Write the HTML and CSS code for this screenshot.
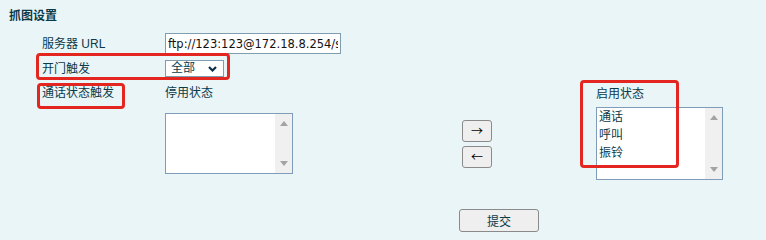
FILE: index.html
```html
<!DOCTYPE html>
<html lang="zh-CN">
<head>
<meta charset="utf-8">
<title>抓图设置</title>
<link rel="stylesheet" href="styles.css">
</head>
<body>
<div class="sheet">
  <div class="title">抓图设置</div>

  <div class="row row-url">
    <div class="label">服务器 URL</div>
    <input class="url-input" type="text" value="ftp://123:123@172.18.8.254/snapshot">
  </div>

  <div class="row row-door">
    <div class="label">开门触发</div>
    <div class="select">
      <span class="select-text">全部</span>
      <svg class="chevron" width="9" height="6" viewBox="0 0 9 6"><path d="M1 1 L4.5 4.5 L8 1" fill="none" stroke="#0b2f4a" stroke-width="2.2"/></svg>
    </div>
  </div>

  <div class="row row-call">
    <div class="label">通话状态触发</div>
    <div class="transfer">
      <div class="col col-off">
        <div class="col-label">停用状态</div>
        <div class="listbox list-off">
          <div class="items"></div>
          <div class="scroll"><span class="tri up"></span><span class="tri down"></span></div>
        </div>
      </div>
      <div class="arrows">
        <button class="arrow-btn" type="button">→</button>
        <button class="arrow-btn" type="button">←</button>
      </div>
      <div class="col col-on">
        <div class="col-label">启用状态</div>
        <div class="listbox list-on">
          <div class="items">
            <div class="item">通话</div>
            <div class="item">呼叫</div>
            <div class="item">振铃</div>
          </div>
          <div class="scroll"><span class="tri up"></span><span class="tri down"></span></div>
        </div>
      </div>
    </div>
  </div>

  <div class="submit-row">
    <button class="submit" type="button">提交</button>
  </div>

  <div class="mark mark-door"></div>
  <div class="mark mark-call"></div>
  <div class="mark mark-on"></div>
</div>
</body>
</html>
```

FILE: styles.css
```css
html, body {
  margin: 0;
  padding: 0;
}
body {
  background: #eaf5f8;
  color: #0a3a4a;
  font-family: "Liberation Sans", "Noto Sans CJK SC", sans-serif;
  font-size: 12px;
  width: 766px;
  height: 240px;
  overflow: hidden;
}
.sheet {
  position: relative;
  width: 766px;
  height: 240px;
}
.title {
  padding: 9px 0 0 9px;
  font-weight: bold;
  line-height: 14px;
  height: 14px;
}
.row {
  display: flex;
  align-items: center;
  padding-left: 42px;
}
.label {
  width: 123px;
  flex: none;
  line-height: 20px;
}
.row-url {
  margin-top: 10px;
  height: 21px;
}
.url-input {
  box-sizing: border-box;
  width: 176px;
  height: 21px;
  margin: 0;
  padding: 0 2px;
  border: 1px solid #7f9db0;
  background: #fff;
  color: #111;
  font-family: "DejaVu Sans", sans-serif;
  font-size: 11.5px;
  outline: none;
}
.row-door {
  margin-top: 6px;
  height: 17px;
}
.select {
  box-sizing: border-box;
  width: 59px;
  height: 17px;
  border: 1px solid #7f9db0;
  background: #fff;
  display: flex;
  align-items: center;
  justify-content: space-between;
  padding: 0 6px 0 5px;
}
.select-text {
  line-height: 15px;
  color: #0a3a4a;
}
.chevron {
  display: block;
}
.row-call {
  margin-top: 6px;
  align-items: flex-start;
}
.transfer {
  display: flex;
  align-items: flex-start;
}
.col-label {
  line-height: 20px;
}
.col-off .listbox {
  margin-top: 10px;
  width: 128px;
  height: 61px;
}
.col-on {
  margin-left: 104px;
  margin-top: 1px;
}
.col-on .listbox {
  margin-top: 3px;
  width: 127px;
  height: 73px;
}
.listbox {
  box-sizing: border-box;
  border: 1px solid #7f9db9;
  background: #fff;
  display: flex;
}
.items {
  flex: 1;
  padding-left: 2px;
}
.item {
  line-height: 18px;
  color: #0a3a4a;
}
.scroll {
  width: 17px;
  flex: none;
  background: #f0f0f0;
  display: flex;
  flex-direction: column;
  justify-content: space-between;
  align-items: center;
  padding: 7px 0 7px;
}
.tri {
  width: 0;
  height: 0;
  border-left: 4px solid transparent;
  border-right: 4px solid transparent;
}
.tri.up {
  border-bottom: 5px solid #a3a3a3;
}
.tri.down {
  border-top: 5px solid #a3a3a3;
}
.arrows {
  margin-left: 169px;
  margin-top: 37px;
  display: flex;
  flex-direction: column;
  gap: 4px;
}
.arrow-btn {
  box-sizing: border-box;
  width: 30px;
  height: 22px;
  margin: 0;
  padding: 0;
  border: 1px solid #8a8a8a;
  border-radius: 3px;
  background: #efefef;
  color: #000;
  font-family: "Noto Sans CJK SC", sans-serif;
  font-size: 12px;
  line-height: 20px;
}
.submit-row {
  display: flex;
  padding-left: 459px;
  margin-top: 29px;
}
.submit {
  box-sizing: border-box;
  width: 80px;
  height: 23px;
  margin: 0;
  padding: 0;
  border: 1px solid #8a8a8a;
  border-radius: 3px;
  background: #efefef;
  color: #0a3a4a;
  font-family: "Liberation Sans", "Noto Sans CJK SC", sans-serif;
  font-size: 12px;
}
.mark {
  position: absolute;
  box-sizing: border-box;
  border: 3px solid #e3261f;
  border-radius: 4px;
}
.mark-door {
  left: 36px;
  top: 53px;
  width: 194px;
  height: 27px;
}
.mark-call {
  left: 37px;
  top: 83px;
  width: 88px;
  height: 26px;
}
.mark-on {
  left: 580px;
  top: 80px;
  width: 99px;
  height: 88px;
}
```
